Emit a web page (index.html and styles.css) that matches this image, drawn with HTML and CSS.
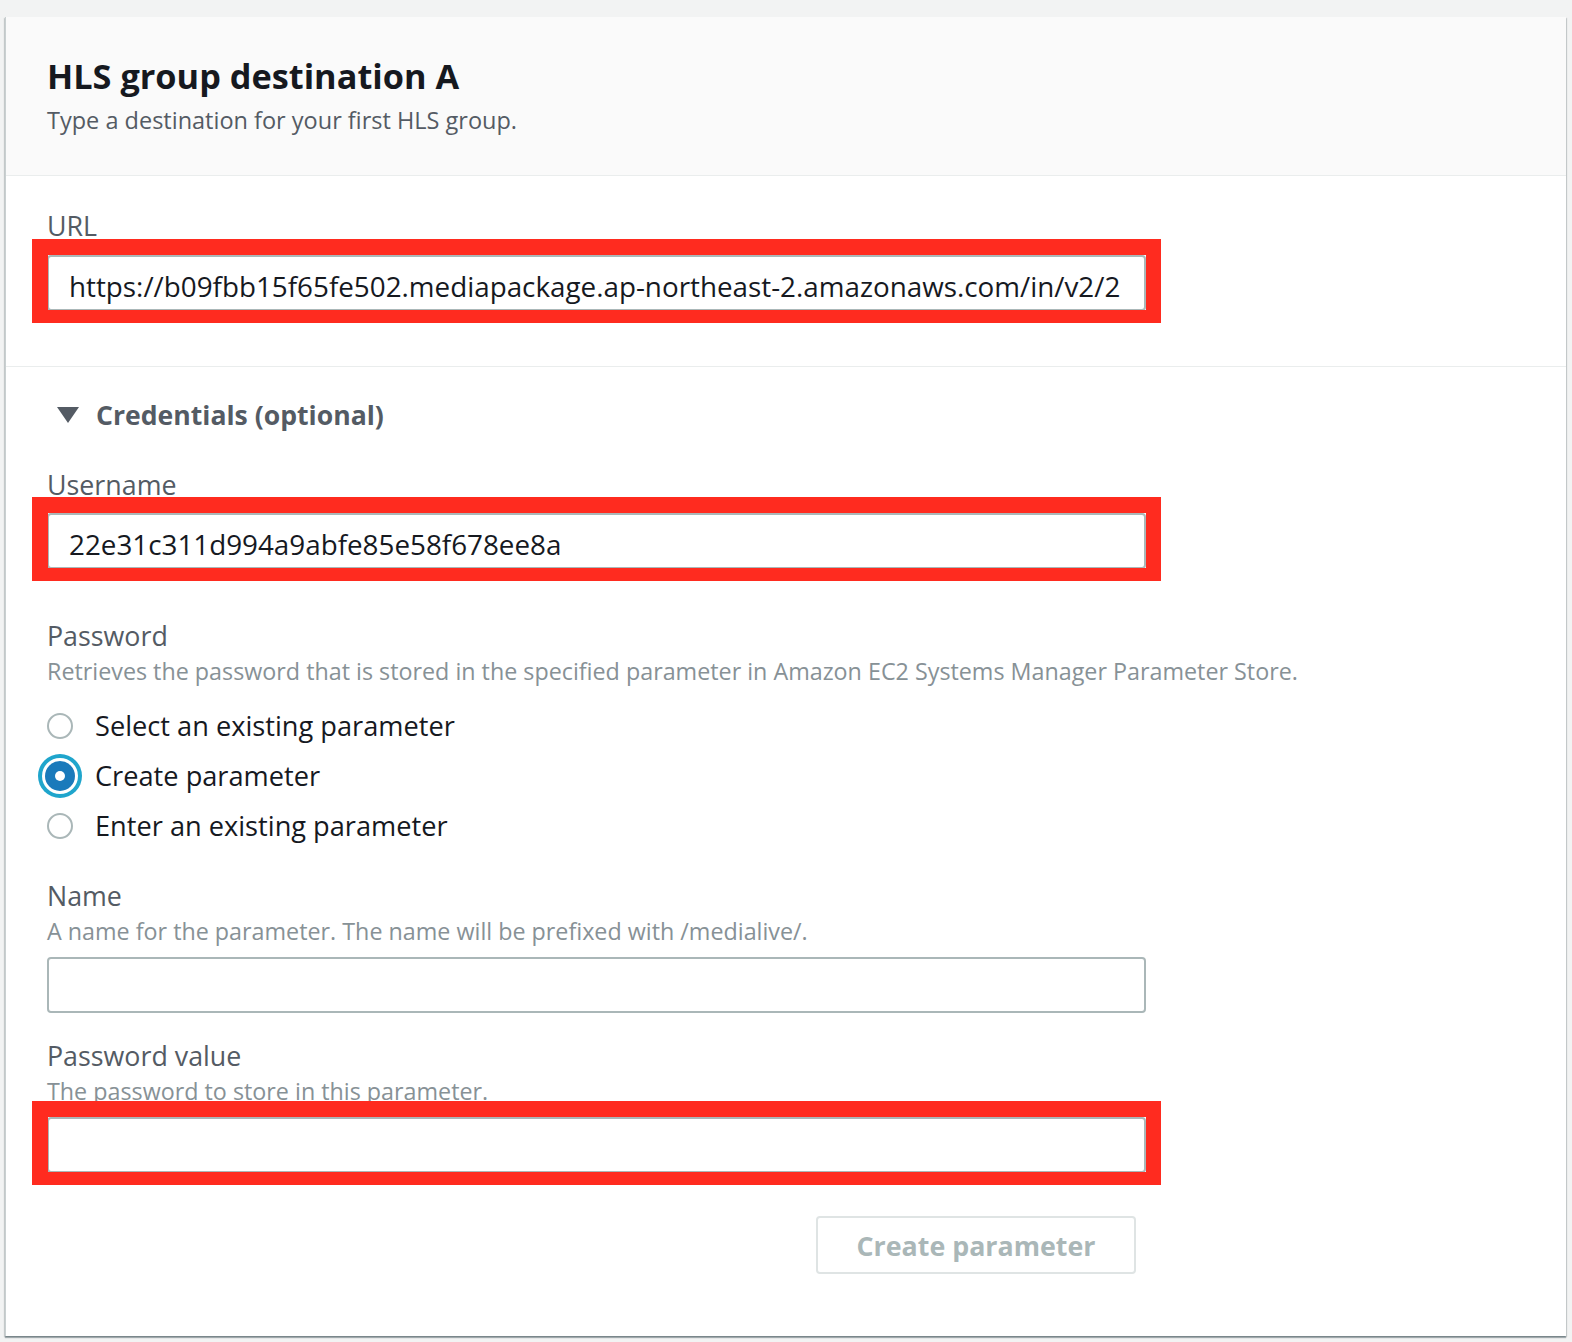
FILE: index.html
```html
<!DOCTYPE html>
<html lang="en">
<head>
<meta charset="utf-8">
<title>HLS group destination A</title>
<link rel="stylesheet" href="styles.css">
</head>
<body>
<div class="card">
  <header class="card-head">
    <h2 class="title">HLS group destination A</h2>
    <p class="subtitle">Type a destination for your first HLS group.</p>
  </header>

  <section class="sec sec-url">
    <div class="label">URL</div>
    <div class="input marked"><span class="val">https://b09fbb15f65fe502.mediapackage.ap-northeast-2.amazonaws.com/in/v2/2</span></div>
  </section>

  <section class="sec sec-cred">
    <div class="expander"><span class="tri"></span><span>Credentials (optional)</span></div>

    <div class="field f-user">
      <div class="label">Username</div>
      <div class="input marked"><span class="val">22e31c311d994a9abfe85e58f678ee8a</span></div>
    </div>

    <div class="field f-pass">
      <div class="label">Password</div>
      <div class="desc">Retrieves the password that is stored in the specified parameter in Amazon EC2 Systems Manager Parameter Store.</div>
      <div class="radios">
        <div class="radio"><span class="dot"></span><span class="rlabel">Select an existing parameter</span></div>
        <div class="radio on"><span class="dot"></span><span class="rlabel">Create parameter</span></div>
        <div class="radio"><span class="dot"></span><span class="rlabel">Enter an existing parameter</span></div>
      </div>
    </div>

    <div class="field f-name">
      <div class="label">Name</div>
      <div class="desc">A name for the parameter. The name will be prefixed with /medialive/.</div>
      <div class="input"></div>
    </div>

    <div class="field f-pval">
      <div class="label">Password value</div>
      <div class="desc">The password to store in this parameter.</div>
      <div class="input marked"></div>
    </div>

    <div class="actions">
      <button class="btn" type="button" disabled>Create parameter</button>
    </div>
  </section>
</div>
</body>
</html>
```

FILE: styles.css
```css
html, body {
  margin: 0;
  padding: 0;
}
body {
  background: #f2f3f3;
  font-family: "Open Sans", "Liberation Sans", sans-serif;
  color: #16191f;
}
.card {
  margin: 17px 6px 6px 5px;
  width: 1561px;
  height: 1319px;
  box-sizing: border-box;
  background: #fff;
  border-left: 1px solid #c9d0d1;
  box-shadow: 0 2px 1px rgba(0, 28, 36, 0.3), 1px 1px 1px rgba(0, 28, 36, 0.15), -1px 1px 1px rgba(0, 28, 36, 0.15);
  display: flex;
  flex-direction: column;
}
.card-head {
  background: #fafafa;
  border-bottom: 1px solid #eaeded;
  padding: 37px 41px 40px;
}
.title {
  margin: 0;
  font-size: 34.3px;
  line-height: 44px;
  font-weight: 700;
  color: #16191f;
}
.subtitle {
  margin: 7px 0 0;
  font-size: 23.5px;
  line-height: 30px;
  color: #545b64;
}
.sec {
  padding: 0 41px;
}
.sec-url {
  padding-top: 33px;
  padding-bottom: 55px;
  border-bottom: 1px solid #eaeded;
}
.sec-cred {
  padding-top: 31px;
  flex: 1;
}
.label {
  font-size: 26.8px;
  line-height: 34px;
  color: #545b64;
}
.sec-url .label {
  margin-bottom: 12px;
}
.desc {
  font-size: 23.3px;
  line-height: 32px;
  color: #879196;
  margin-top: 2px;
}
.input {
  position: relative;
  width: 1099px;
  height: 56px;
  box-sizing: border-box;
  border: 2px solid #aab7b8;
  border-radius: 4px;
  background: #fff;
  display: flex;
  align-items: center;
  padding: 6px 10px 0 20px;
}
.val {
  display: block;
  overflow: hidden;
  white-space: nowrap;
  font-size: 27.8px;
  line-height: 36px;
  color: #16191f;
}
.marked::after {
  content: "";
  position: absolute;
  top: -18px;
  bottom: -14px;
  left: -17px;
  right: -17px;
  border-style: solid;
  border-color: #ff2b1f;
  border-width: 16px 15px 13px 16px;
  pointer-events: none;
}
.expander {
  display: flex;
  align-items: center;
  padding-left: 10px;
  font-size: 26.6px;
  line-height: 34px;
  font-weight: 700;
  color: #545b64;
  margin-bottom: 36px;
}
.tri {
  width: 0;
  height: 0;
  border-left: 11px solid transparent;
  border-right: 11px solid transparent;
  border-top: 16px solid #545b64;
  margin-right: 17px;
}
.f-user .label {
  margin-bottom: 11px;
}
.f-pass {
  margin-top: 50px;
}
.radios {
  margin-top: 14px;
  display: flex;
  flex-direction: column;
}
.radio {
  height: 50px;
  display: flex;
  align-items: center;
}
.dot {
  position: relative;
  width: 26px;
  height: 26px;
  box-sizing: border-box;
  border: 2px solid #aab7b8;
  border-radius: 50%;
  margin-right: 22px;
  flex: none;
}
.radio.on .dot {
  border: none;
}
.radio.on .dot::before {
  content: "";
  position: absolute;
  left: -2px;
  top: -2px;
  width: 30px;
  height: 30px;
  box-sizing: border-box;
  border-radius: 50%;
  background: #1a7abb;
  box-shadow: 0 0 0 3px #fff, 0 0 0 7px #1fa5cc;
}
.radio.on .dot::after {
  content: "";
  position: absolute;
  left: 8px;
  top: 8px;
  width: 10px;
  height: 10px;
  border-radius: 50%;
  background: #fff;
}
.rlabel {
  font-size: 27.2px;
  line-height: 34px;
  color: #16191f;
}
.f-name {
  margin-top: 28px;
}
.f-name .input,
.f-pval .input {
  margin-top: 10px;
}
.f-pval {
  margin-top: 26px;
}
.actions {
  width: 1099px;
  display: flex;
  justify-content: flex-end;
  padding-right: 10px;
  box-sizing: border-box;
  margin-top: 43px;
}
.btn {
  width: 320px;
  height: 58px;
  box-sizing: border-box;
  border: 2px solid #dfe4e4;
  border-radius: 4px;
  background: #fff;
  font-family: "Open Sans", "Liberation Sans", sans-serif;
  font-size: 26.8px;
  font-weight: 700;
  color: #aab7b8;
  padding: 0;
}
```
